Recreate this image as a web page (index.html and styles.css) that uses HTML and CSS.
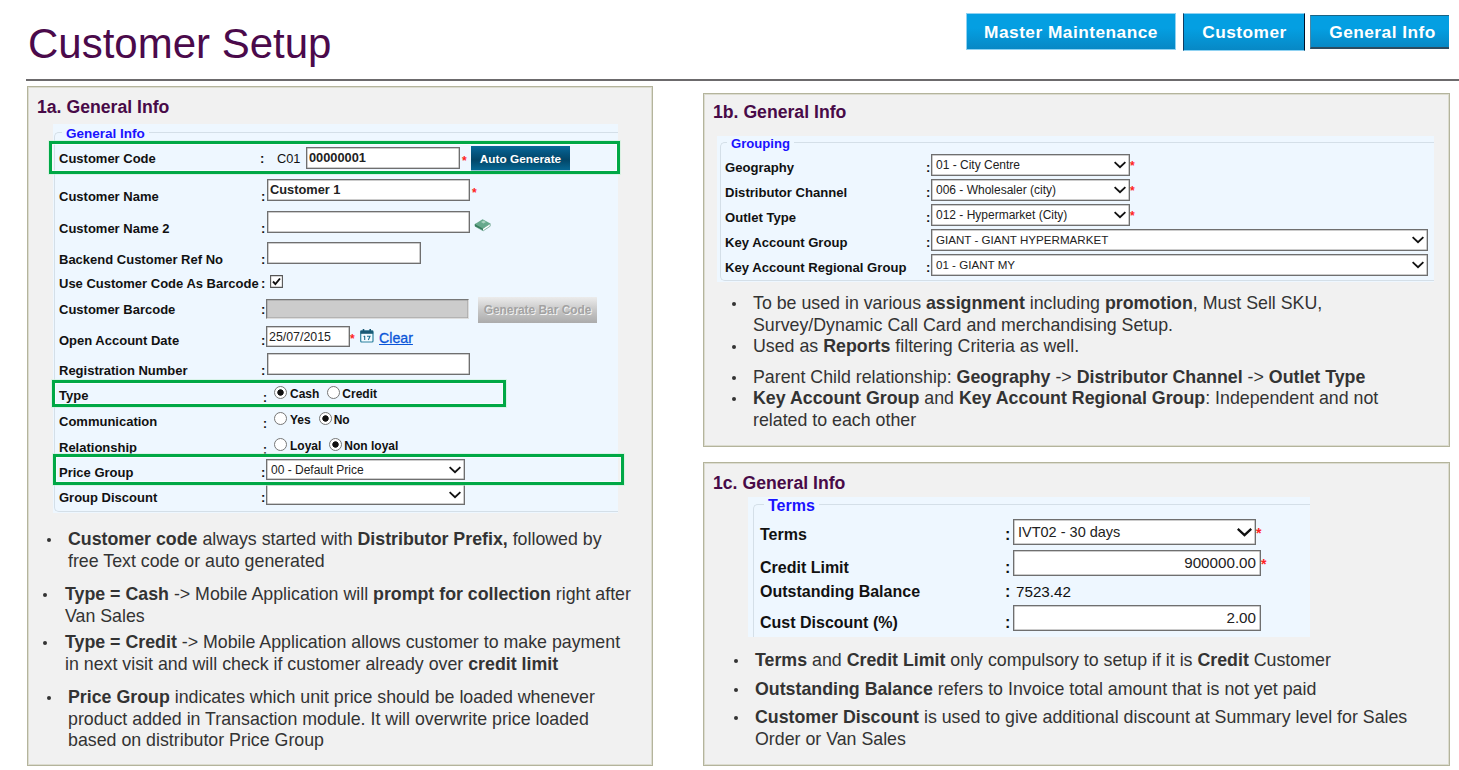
FILE: index.html
```html
<!DOCTYPE html>
<html lang="en">
<head>
<meta charset="utf-8">
<title>Customer Setup</title>
<link rel="stylesheet" href="styles.css">
</head>
<body>
<svg class="defs" width="0" height="0">
  <symbol id="chevron" viewBox="0 0 12 8"><path d="M.6 1.1 6 6.1l5.4-5" fill="none" stroke="#111" stroke-width="1.9"/></symbol>
</svg>
<header class="header">
  <h1 class="title">Customer Setup</h1>
  <nav class="crumbs">
    <span class="crumb crumb-master">Master Maintenance</span>
    <span class="crumb crumb-customer">Customer</span>
    <span class="crumb crumb-info">General Info</span>
  </nav>
</header>
<main class="columns">
  <section class="panel panel-a">
    <h2 class="heading">1a. General Info</h2>
    <div class="form form-a">
      <div class="frame"></div>
      <div class="legend"><span>General Info</span></div>
      <div class="row r-code"><span class="label">Customer Code</span><span class="colon">:</span><span class="prefix">C01</span><span class="field w-code bold">00000001</span><span class="star">*</span><span class="btn">Auto Generate</span></div>
      <div class="row r-name"><span class="label">Customer Name</span><span class="colon">:</span><span class="field w-long bold">Customer 1</span><span class="star">*</span></div>
      <div class="row r-name2"><span class="label">Customer Name 2</span><span class="colon">:</span><span class="field w-long"></span>
        <svg class="book" width="18" height="14" viewBox="0 0 18 14"><path d="M1 6v2.2l8.2 4.6 7-4.6V5.7L9 10.300z" fill="#fff" stroke="#5d9b83" stroke-width=".7"/><path d="M1 6 8.600 1.200l7.800 4.300L9 10.500z" fill="#67a98c"/><path d="M1 6v2.200l8 4.400v-2.200z" fill="#357d5d"/><path d="m7 4 2.500-1.400L12 4 9.500 5.600z" fill="#a9d3bf"/></svg></div>
      <div class="row r-ref"><span class="label">Backend Customer Ref No</span><span class="colon">:</span><span class="field w-code"></span></div>
      <div class="row r-use"><span class="label">Use Customer Code As Barcode</span><span class="colon">:</span>
        <svg class="check" width="13" height="13" viewBox="0 0 13 13"><path d="M.6.6h11.800v11.800H.6z" fill="#fff" stroke="#555" stroke-width="1.100"/><path d="m3 6.500 2.400 2.600L10 3.500" fill="none" stroke="#111" stroke-width="1.900"/></svg></div>
      <div class="row r-barcode"><span class="label">Customer Barcode</span><span class="colon">:</span><span class="field w-long disabled"></span><span class="btn btn-off">Generate Bar Code</span></div>
      <div class="row r-date"><span class="label">Open Account Date</span><span class="colon">:</span><span class="field w-date">25/07/2015</span><span class="star">*</span>
        <svg class="calendar" width="14" height="14" viewBox="0 0 14 14"><rect x=".7" y="2" width="12.300" height="11" rx="1" fill="#f2fbff" stroke="#2d819f" stroke-width="1.200"/><path d="M.5 1.500h12.700v3.300H.5z" fill="#195a76"/><path d="M3.500 0v2.500M10.200 0v2.500" stroke="#195a76" stroke-width="1.600"/><path d="M4.700 7v4M3.700 7.700l1-.7M7 7.200h3L8.300 11" stroke="#1e7194" stroke-width="1.100" fill="none"/></svg>
        <a class="clear">Clear</a></div>
      <div class="row r-reg"><span class="label">Registration Number</span><span class="colon">:</span><span class="field w-long"></span></div>
      <div class="row r-radio"><span class="label">Type</span><span class="colon">:</span><i class="radio on"></i><b>Cash</b><i class="radio"></i><b>Credit</b></div>
      <div class="row r-radio"><span class="label">Communication</span><span class="colon">:</span><i class="radio"></i><b>Yes</b><i class="radio on"></i><b>No</b></div>
      <div class="row r-radio r-rel"><span class="label">Relationship</span><span class="colon">:</span><i class="radio"></i><b>Loyal</b><i class="radio on"></i><b>Non loyal</b></div>
      <div class="row r-price"><span class="label">Price Group</span><span class="colon">:</span><span class="field select w-price">00 - Default Price<svg><use href="#chevron"/></svg></span></div>
      <div class="row r-disc"><span class="label">Group Discount</span><span class="colon">:</span><span class="field select w-price"><svg><use href="#chevron"/></svg></span></div>
      <div class="mark mark-code"></div>
      <div class="mark mark-type"></div>
      <div class="mark mark-price"></div>
    </div>
    <ul class="notes notes-a">
      <li><p><b>Customer code</b> always started with <b>Distributor Prefix,</b> followed by<br>free Text code or auto generated</p></li>
      <li class="out"><p><b>Type = Cash</b> -&gt; Mobile Application will <b>prompt for collection</b> right after<br>Van Sales</p></li>
      <li class="out tight"><p><b>Type = Credit</b> -&gt; Mobile Application allows customer to make payment<br>in next visit and will check if customer already over <b>credit limit</b></p></li>
      <li><p><b>Price Group</b> indicates which unit price should be loaded whenever<br>product added in Transaction module. It will overwrite price loaded<br>based on distributor Price Group</p></li>
    </ul>
  </section>
  <div class="side">
    <section class="panel panel-b">
      <h2 class="heading">1b. General Info</h2>
      <div class="form form-b">
        <div class="frame"></div>
        <div class="legend"><span>Grouping</span></div>
        <div class="row"><span class="label">Geography</span><span class="colon">:</span><span class="field select">01 - City Centre<svg><use href="#chevron"/></svg></span><span class="star">*</span></div>
        <div class="row"><span class="label">Distributor Channel</span><span class="colon">:</span><span class="field select">006 - Wholesaler (city)<svg><use href="#chevron"/></svg></span><span class="star">*</span></div>
        <div class="row"><span class="label">Outlet Type</span><span class="colon">:</span><span class="field select">012 - Hypermarket (City)<svg><use href="#chevron"/></svg></span><span class="star">*</span></div>
        <div class="row"><span class="label">Key Account Group</span><span class="colon">:</span><span class="field select wide"><span class="caps">GIANT - GIANT HYPERMARKET</span><svg><use href="#chevron"/></svg></span></div>
        <div class="row"><span class="label">Key Account Regional Group</span><span class="colon">:</span><span class="field select wide"><span class="caps">01 - GIANT MY</span><svg><use href="#chevron"/></svg></span></div>
      </div>
      <ul class="notes notes-b">
        <li><p>To be used in various <b>assignment</b> including <b>promotion</b>, Must Sell SKU,<br>Survey/Dynamic Call Card and merchandising Setup.</p></li>
        <li><p>Used as <b>Reports</b> filtering Criteria as well.</p></li>
        <li class="gap"><p>Parent Child relationship: <b>Geography</b> -&gt; <b>Distributor Channel</b> -&gt; <b>Outlet Type</b></p></li>
        <li><p><b>Key Account Group</b> and <b>Key Account Regional Group</b>: Independent and not<br>related to each other</p></li>
      </ul>
    </section>
    <section class="panel panel-c">
      <h2 class="heading">1c. General Info</h2>
      <div class="form form-c">
        <div class="frame"></div>
        <div class="legend"><span>Terms</span></div>
        <div class="row r-terms"><span class="label">Terms</span><span class="colon">:</span><span class="field select">IVT02 - 30 days<svg><use href="#chevron"/></svg></span><span class="star">*</span></div>
        <div class="row r-limit"><span class="label">Credit Limit</span><span class="colon">:</span><span class="field num">900000.00</span><span class="star">*</span></div>
        <div class="row r-balance"><span class="label">Outstanding Balance</span><span class="colon">:</span><span class="value">7523.42</span></div>
        <div class="row r-cust"><span class="label">Cust Discount (%)</span><span class="colon">:</span><span class="field num">2.00</span></div>
      </div>
      <ul class="notes notes-c">
        <li><p><b>Terms</b> and <b>Credit Limit</b> only compulsory to setup if it is <b>Credit</b> Customer</p></li>
        <li><p><b>Outstanding Balance</b> refers to Invoice total amount that is not yet paid</p></li>
        <li><p><b>Customer Discount</b> is used to give additional discount at Summary level for Sales<br>Order or Van Sales</p></li>
      </ul>
    </section>
  </div>
</main>
</body>
</html>
```

FILE: styles.css
```css
* { box-sizing: border-box; }
body { margin: 0; width: 1459px; height: 770px; overflow: hidden; background: #fff; color: #333; font-family: "Liberation Sans", Arial, sans-serif; }
.defs { display: block; }

/* Header */
.header { display: flex; justify-content: space-between; height: 81px; margin-left: 26px; padding: 0 10px 0 2px; border-bottom: 2px solid #6c6a6c; }
.title { margin: 20px 0 0; font-size: 42px; line-height: 48px; font-weight: 400; color: #4b0a4b; white-space: nowrap; }
.crumbs { display: flex; align-items: flex-start; padding-top: 13px; }
.crumb { display: flex; align-items: center; justify-content: center; color: #fff; font-weight: 700; font-size: 17.300px; letter-spacing: .48px; white-space: nowrap; background: linear-gradient(#049fe2 40%, #0788c5); }
.crumb-master { width: 210px; height: 37px; border: 1px solid #8fd2f2; margin-right: 7px; padding-top: 1px; }
.crumb-customer { width: 122px; height: 38px; border: 1px solid #8fd2f2; border-left-color: #123c60; border-right-color: #001028; margin-right: 5px; padding-left: 1px; }
.crumb-info { width: 139px; height: 34px; margin-top: 2px; border-top: 1px solid #1a6485; border-bottom: 2px solid #2c4b60; border-left: 1px solid #4a86a5; padding: 1px 0 0 5px; }

/* Panels */
.columns { display: flex; align-items: flex-start; padding-left: 27px; }
.side { margin-left: 50px; }
.panel { background: #f1f1f1; border: 1px solid #b4b49c; box-shadow: inset 0 0 0 1px #dcdcd0; }
.panel-a { width: 626px; height: 680px; margin-top: 5px; }
.panel-b { width: 747px; height: 354px; margin-top: 12px; }
.panel-c { width: 747px; height: 304px; margin-top: 15px; }
.heading { margin: 10px 0 0 9px; font-size: 17.650px; line-height: 20px; color: #480a48; white-space: nowrap; }
.panel-b .heading { margin-top: 8px; }

/* Forms */
.form { position: relative; background: #eef7ff; color: #111; font-size: 13px; line-height: 16px; white-space: nowrap; }
.frame { position: absolute; border: 1px solid #d4dfe8; border-right: 0; border-radius: 5px 0 0 5px; }
.legend { position: relative; color: #1a12ff; font-weight: 700; }
.legend span { background: #eef7ff; padding: 0 4px; }
.row { position: relative; display: flex; align-items: flex-start; }
.label { font-weight: 700; flex: none; }
.colon { font-weight: 700; flex: none; }
.star { color: #f22; font-size: 12px; font-weight: 700; }
.field { flex: none; display: flex; align-items: center; background: #fff; border: 1px solid #6f6f6f; box-shadow: inset 0 0 0 .5px #999; font-size: 12.400px; padding: 0 2px; height: 22px; color: #222; }
.field svg { width: 12px; height: 8px; margin-left: auto; }
.bold { font-weight: 700; font-size: 12.800px; color: #222; }
.select { padding: 0 3px 0 4px; font-size: 12px; }
.mark { position: absolute; border: 3px solid #00a846; box-shadow: 0 0 0 1px rgba(200,240,215,.55), inset 0 0 0 1px rgba(255,255,255,.6); }

.form-a { width: 565px; height: 389px; margin: 7px 0 0 25px; }
.form-a .frame { left: 1px; top: 8px; right: 0; bottom: 1px; }
.form-a .legend { height: 23px; padding: 2px 0 0 9px; font-size: 13.500px; }
.form-a .label { width: 202px; margin-left: 6px; }
.form-a .colon { width: 6px; }
.r-code { height: 32px; }
.r-code .label, .r-code .colon, .prefix { padding-top: 4px; }
.r-code .colon { margin-left: -1px; }
.prefix { width: 29px; margin-left: 11px; font-size: 12.800px; }
.w-code { width: 154px; }
.r-code .star { margin: 6px 0 0 2px; width: 9px; }
.btn { display: flex; align-items: center; justify-content: center; width: 99px; height: 26px; margin-top: -2px; color: #fff; font-weight: 700; font-size: 11.800px; background: linear-gradient(#08699a, #04547e 30%, #024668 55%, #066a96); }
.r-code .btn { height: 25px; margin-top: -1px; }
.r-name { height: 32px; }
.r-name .label, .r-name .colon, .r-name2 .label, .r-name2 .colon, .r-ref .label, .r-ref .colon { padding-top: 10px; }
.r-reg .label, .r-reg .colon { padding-top: 10px; }
.w-long { width: 203px; }
.r-name .star { margin: 6px 0 0 2px; }
.r-name2, .r-ref { height: 31px; }
.book { margin: 7px 0 0 4px; }
.r-use { height: 26px; padding-top: 3px; }
.check { margin: -1px 0 0 3px; }
.r-barcode { height: 27px; }
.r-barcode .label, .r-barcode .colon { padding-top: 3px; }
.disabled { margin-left: -1px; height: 20px; background: #ccc; border-color: #777 #ddd #ddd #777; }
.btn-off { width: 119px; margin-left: 9px; background: linear-gradient(#ececec, #c8c8c8 50%, #ababab); color: #a2a2a2; text-shadow: 1px 1px #f4f4f4; font-size: 11.900px; }
.r-date { height: 27px; }
.r-date .label, .r-date .colon { padding-top: 7px; }
.w-date { width: 84px; margin-left: -1px; height: 21px; }
.r-date .star { margin: 5px 0 0; width: 10px; }
.calendar { margin-top: 3px; }
.clear { margin: 4px 0 0 5px; color: #0b55d8; text-decoration: underline; font-size: 14.200px; -webkit-text-stroke: .3px #0b55d8; }
.r-reg { height: 32px; }
.r-radio { height: 26px; font-size: 12px; }
.r-radio b { padding-top: 1px; }
.r-radio .label { font-size: 13px; padding-top: 3px; }
.r-radio .colon { margin: 5px 0 0 2px; }
.radio { flex: none; width: 13px; height: 13px; margin: 1px 3px 0 5px; border: 1px solid #777; border-radius: 50%; background: #fff; }
b + .radio { margin: 1px 2px 0 8px; }
.radio.on { background: radial-gradient(circle, #111 0 2.800px, #fff 3.600px); }
.r-rel { height: 22px; }
.r-price { height: 25px; }
.r-price .label, .r-price .colon, .r-disc .label, .r-disc .colon { padding-top: 6px; }
.w-price { width: 199px; margin-left: -1px; height: 21px; }
.mark-code { left: -4px; top: 17px; width: 571px; height: 33px; }
.mark-type { left: -1px; top: 256px; width: 454px; height: 27px; }
.mark-price { left: 0; top: 330px; width: 571px; height: 31px; }

.panel-b .form-b { width: 717px; height: 146px; margin: 14px 0 0 13px; }
.form-b .frame { left: 3px; top: 6px; right: 0; bottom: 1px; }
.form-b .legend { height: 18px; padding-left: 10px; font-size: 13.100px; }
.form-b .row { height: 25px; }
.form-b .label { width: 201px; margin-left: 8px; padding-top: 6px; font-size: 13.100px; }
.form-b .colon { width: 5px; padding-top: 6px; }
.form-b .field { width: 199px; }
.form-b .field.wide { width: 497px; }
.form-b .star { margin-top: 4px; }
.caps { font-size: 11.600px; }

.form-c { width: 562px; height: 140px; margin: 4px 0 0 44px; font-size: 16px; line-height: 18px; }
.form-c .frame { left: 5px; top: 7px; right: 0; bottom: 0; border-bottom: 0; border-radius: 5px 0 0; }
.form-c .legend { height: 22px; padding-left: 16px; }
.form-c .label { width: 245px; margin-left: 12px; padding-top: 7px; }
.form-c .colon { width: 8px; padding-top: 7px; }
.r-terms { height: 31px; }
.r-terms .field { width: 243px; height: 26px; font-size: 14.500px; }
.r-terms .field svg { width: 15px; height: 11px; }
.form-c .star { font-size: 14px; margin-top: 5px; }
.r-limit { height: 33px; }
.form-c .r-limit .label, .form-c .r-limit .colon { padding-top: 9px; }
.num { width: 248px; height: 26px; justify-content: flex-end; font-size: 15.200px; padding: 0 4px; }
.r-balance { height: 22px; }
.form-c .r-balance .label, .form-c .r-balance .colon, .value { padding-top: 0; }
.value { margin-left: 3px; font-size: 15.200px; }
.form-c .r-cust .label, .form-c .r-cust .colon { padding-top: 9px; }

/* Notes */
.notes { list-style: none; margin: 0; padding: 0; font-size: 17.790px; line-height: 21.700px; white-space: nowrap; }
.notes li { display: flex; }
.notes li::before { content: ""; flex: none; width: 4px; height: 4px; margin: 9px 17px 0 0; border-radius: 50%; background: #333; }
.notes p { margin: 0; }
.notes-a { padding: 16px 0 0 19px; }
.notes-a li + li { margin-top: 11.600px; }
.notes-a .out { margin-left: -4px; }
.notes-a li.tight { margin-top: 4.600px; }
.notes-a .out::before { margin-right: 18px; }
.notes-b { padding: 11px 0 0 28px; }
.notes-b .gap { margin-top: 8.500px; }
.notes-c { padding: 13px 0 0 30px; }
.notes-c li + li { margin-top: 6.900px; }
```
